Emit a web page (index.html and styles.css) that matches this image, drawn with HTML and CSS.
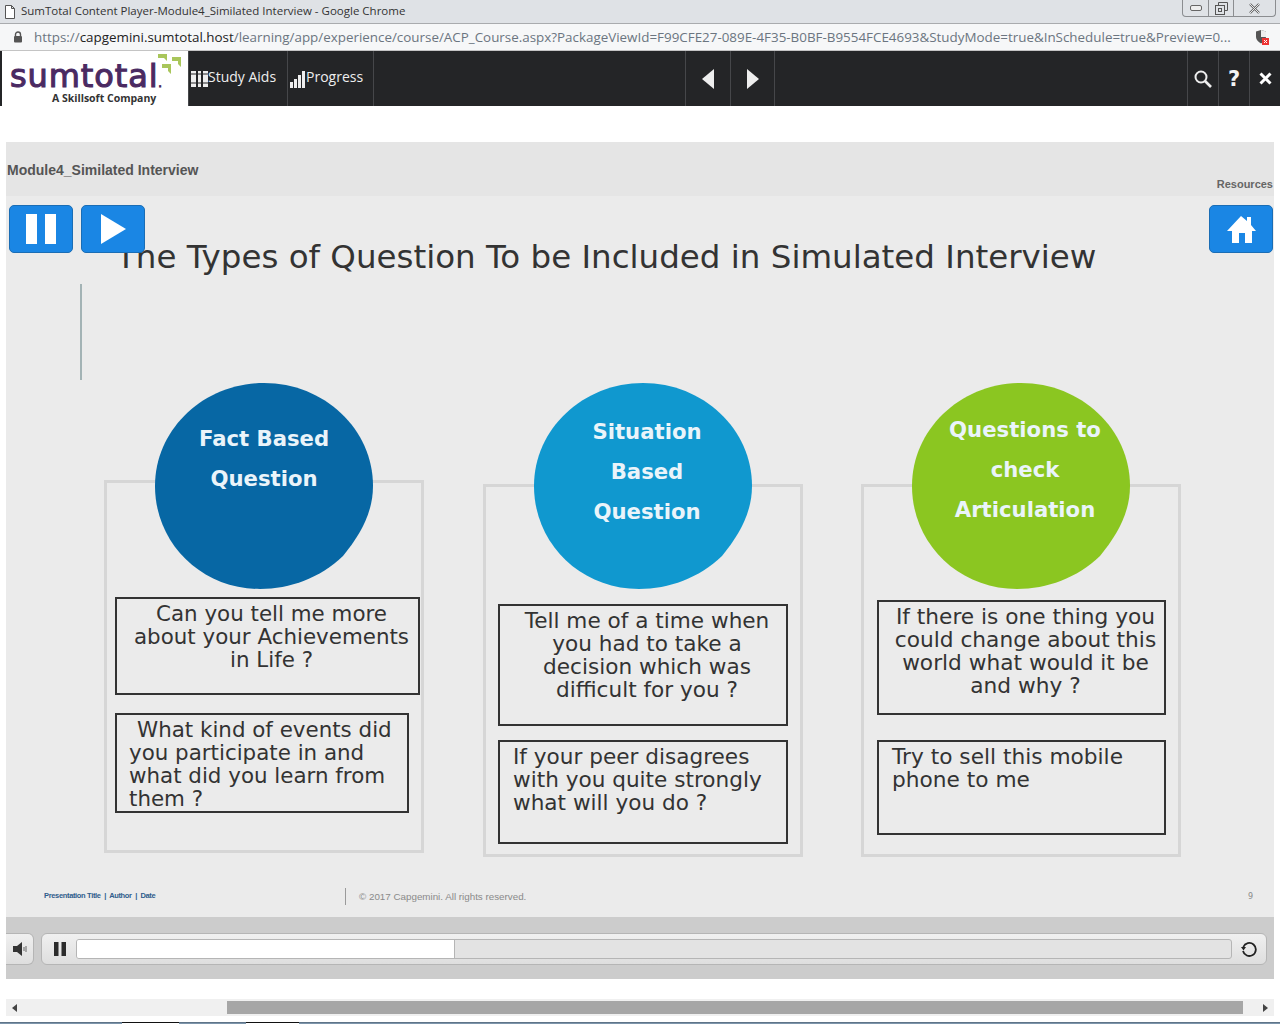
FILE: index.html
```html
<!DOCTYPE html>

<html>
<head>
    <title>SumTotal Content Player-Module4_Similated Interview - Google Chrome</title>
    <link rel="stylesheet" href="styles.css">
</head>

<body>
    <div class="titlebar">
        <svg class="page_icon" width="12" height="14" viewBox="0 0 12 14"><path d="M1.5 .5h6l3 3v10h-9z M7.5 .5v3h3" fill="#fff" stroke="#555"/></svg>
        <span class="title_text">SumTotal Content Player-Module4_Similated Interview - Google Chrome</span>
        <div class="window_btns">
            <div class="win_btn win_min"><svg width="12" height="6" viewBox="0 0 12 6"><rect x=".5" y=".5" width="11" height="5" rx="1.5" fill="#eee" stroke="#666"/></svg></div>
            <div class="win_btn win_max"><svg width="13" height="13" viewBox="0 0 13 13"><path d="M3.5 3V.5h9v8H10" fill="none" stroke="#555"/><rect x=".5" y="3.5" width="9" height="9" fill="none" stroke="#555"/><rect x="3.5" y="6.5" width="3" height="3" fill="none" stroke="#555"/></svg></div>
            <div class="win_btn win_close"><svg width="13" height="11" viewBox="0 0 13 11"><path d="M2 1l9 9M11 1l-9 9" stroke="#666" stroke-width="2.4"/><path d="M2 1l9 9M11 1l-9 9" stroke="#e8e8e8" stroke-width="1"/></svg></div>
        </div>
    </div>

    <div class="addressbar">
        <svg class="lock" width="10" height="12" viewBox="0 0 10 12"><path d="M2.5 5V3.5a2.5 2.5 0 0 1 5 0V5" fill="none" stroke="#555" stroke-width="1.4"/><rect x="1" y="5" width="8" height="6.500" rx="1" fill="#555"/></svg>
        <span class="url"><span class="url_scheme">https://</span><span class="url_host">capgemini.sumtotal.host</span><span class="url_scheme">/learning/app/experience/course/ACP_Course.aspx?PackageViewId=F99CFE27-089E-4F35-B0BF-B9554FCE4693&amp;StudyMode=true&amp;InSchedule=true&amp;Preview=0...</span></span>
        <svg class="shield" width="14" height="16" viewBox="0 0 14 16"><path d="M6 1l5 1.500V8c0 3-2.500 5-5 6.500C3.500 13 1 11 1 8V2.500z" fill="#555"/><path d="M6 1l5 1.500V8H6z" fill="#eee"/><rect x="7" y="9" width="7" height="7" fill="#e33"/><path d="M9 11l3 3M12 11l-3 3" stroke="#fff"/></svg>
    </div>

    <div class="navbar">
        <div class="logo">
            <div class="logo_word">sumtotal<span class="logo_dot">.</span></div>
            <div class="logo_sub">A Skillsoft Company</div>
            <svg class="logo_arrows" width="36" height="26" viewBox="0 0 36 26"><path d="M8 3h9v7l-3-3H8z M22 6h9v10l-3-3v-3h-6z M12 13h9v10l-3-3v-3h-6z" fill="#a9c65b"/></svg>
        </div>
        <div class="nav_item nav_study">
            <svg width="17" height="18" viewBox="0 0 17 18"><path d="M0 1h5v16H0z M7 1h3v16H7z M12 1h5v16h-5z" fill="#eee"/><path d="M0 4h5M0 13h5M7 4h3M7 13h3M12 4h5M12 13h5" stroke="#242527"/></svg>
            <span>Study Aids</span>
        </div>
        <div class="nav_item nav_progress">
            <svg width="15" height="18" viewBox="0 0 15 18"><path d="M0 12h3v6H0z M4 9h3v9H4z M8 5h3v13H8z M12 1h3v17h-3z" fill="#eee"/></svg>
            <span>Progress</span>
        </div>
        <div class="nav_gap_left"></div>
        <div class="nav_arrow">
            <svg width="12" height="20" viewBox="0 0 12 20"><path d="M12 0v20L0 10z" fill="#eee"/></svg>
        </div>
        <div class="nav_arrow">
            <svg width="12" height="20" viewBox="0 0 12 20"><path d="M0 0v20l12-10z" fill="#eee"/></svg>
        </div>
        <div class="nav_gap_right"></div>
        <div class="nav_tool">
            <svg width="18" height="18" viewBox="0 0 18 18"><circle cx="7" cy="7" r="5.500" fill="none" stroke="#eee" stroke-width="2"/><path d="M11 11l6 6" stroke="#eee" stroke-width="2.600"/></svg>
        </div>
        <div class="nav_tool nav_help">?</div>
        <div class="nav_tool">
            <svg width="13" height="13" viewBox="0 0 13 13"><path d="M1.500 1.500l10 10M11.500 1.500l-10 10" stroke="#fff" stroke-width="3"/></svg>
        </div>
    </div>

    <div class="player">
        <div class="player_head">
            <div class="module_name">Module4_Similated Interview</div>
            <div class="resources">Resources</div>
        </div>

        <div class="slide">
            <div class="slide_btn btn_pause"><svg width="30" height="30" viewBox="0 0 30 30"><path d="M0 0h11v30H0z M19 0h11v30H19z" fill="#fff"/></svg></div>
            <div class="slide_btn btn_play"><svg width="25" height="30" viewBox="0 0 25 30"><path d="M0 0v30l25-15z" fill="#fff"/></svg></div>
            <div class="slide_btn btn_home"><svg width="30" height="28" viewBox="0 0 30 28"><path d="M15 1l6 5V2h4v8l5 6h-4v12h-7V18h-6v10H6V16H1z" fill="#fff"/></svg></div>

            <h1 class="slide_title">The Types of Question To be Included in Simulated Interview</h1>
            <div class="slide_rule"></div>

            <div class="panel panel_a"></div>
            <div class="panel panel_b"></div>
            <div class="panel panel_c"></div>

            <div class="circle circle_a">Fact Based<br>Question</div>
            <div class="circle circle_b">Situation<br>Based<br>Question</div>
            <div class="circle circle_c">Questions to<br>check<br>Articulation</div>

            <div class="qbox box_a1 centered">Can you tell me more<br>about your Achievements<br>in Life ?</div>
            <div class="qbox box_a2"><span class="indent">What kind of events did</span><br>you participate in and<br>what did you learn from<br>them ?</div>
            <div class="qbox box_b1 centered">Tell me of a time when<br>you had to take a<br>decision which was<br>difficult for you ?</div>
            <div class="qbox box_b2">If your peer disagrees<br>with you quite strongly<br>what will you do ?</div>
            <div class="qbox box_c1 centered">If there is one thing you<br>could change about this<br>world what would it be<br>and why ?</div>
            <div class="qbox box_c2">Try to sell this mobile<br>phone to me</div>

            <div class="foot_left">Presentation Title &nbsp;|&nbsp; Author &nbsp;|&nbsp; Date</div>
            <div class="foot_rule"></div>
            <div class="foot_copy">© 2017 Capgemini. All rights reserved.</div>
            <div class="foot_page">9</div>
        </div>

        <div class="controls">
            <div class="ctl_sound">
                <svg width="14" height="14" viewBox="0 0 14 14"><path d="M0 4h4l5-4v14l-5-4H0z" fill="#333"/><path d="M11 5v4M13 4v6" stroke="#666"/></svg>
            </div>
            <div class="ctl_main">
                <svg class="ctl_pause" width="12" height="14" viewBox="0 0 12 14"><path d="M0 0h4.500v14H0z M7.500 0H12v14H7.500z" fill="#2b2b2b"/></svg>
                <div class="track"><div class="track_fill" style="width:377px"></div></div>
                <svg class="ctl_replay" width="16" height="16" viewBox="0 0 16 16"><path d="M2.300 6A6.500 6.500 0 1 1 2 10" fill="none" stroke="#222" stroke-width="1.800"/><path d="M0 6h5L2.500 9.500z" fill="#222"/></svg>
            </div>
        </div>
    </div>

    <div class="hscroll">
        <svg width="5" height="8" viewBox="0 0 5 8"><path d="M5 0v8L0 4z" fill="#444"/></svg>
        <div class="hscroll_track"><div class="hscroll_thumb"></div></div>
        <svg width="5" height="8" viewBox="0 0 5 8"><path d="M0 0v8l5-4z" fill="#444"/></svg>
    </div>

    <div class="taskbar">
        <div class="task_item task_first"></div>
        <div class="task_item task_second"></div>
    </div>
</body>
</html>
```

FILE: styles.css
```css
html, body {
	margin: 0;
	padding: 0;
	height: 1024px;
	overflow: hidden;
	background-color: #ffffff;
}

body {
	font-family: "Open Sans", "Liberation Sans", sans-serif;
}

/* browser window */
.titlebar {
	display: flex;
	align-items: center;
	height: 23px;
	background-color: #dfe2e6;
	border-bottom: 1px solid #a9abae;
	font-size: 11.500px;
	color: #333333;
}

.page_icon {
	margin-left: 4px;
	margin-right: 5px;
}

.title_text {
	flex: 1;
	padding-bottom: 2px;
}

.window_btns {
	display: flex;
	align-self: flex-start;
	height: 16px;
	margin-right: 4px;
	border: 1px solid #8b8d90;
	border-top: none;
	border-radius: 0 0 4px 4px;
}

.win_btn {
	display: flex;
	align-items: center;
	justify-content: center;
	border-left: 1px solid #8b8d90;
}

.win_min {
	width: 25px;
	border-left: none;
}

.win_max {
	width: 24px;
}

.win_close {
	width: 41px;
}

.addressbar {
	display: flex;
	align-items: center;
	height: 26px;
	background-color: #f6f7f8;
	border-bottom: 1px solid #c4c4c4;
	font-size: 13.400px;
}

.lock {
	margin-left: 13px;
	margin-right: 11px;
}

.url {
	width: 1221px;
	white-space: nowrap;
}

.url_scheme {
	color: #6b7580;
}

.url_host {
	color: #222222;
}

.shield {
	margin-right: 11px;
}

/* top navigation */
.navbar {
	display: flex;
	height: 55px;
	background-color: #242527;
	color: #eeeeee;
	font-size: 14px;
}

.logo {
	position: relative;
	width: 186px;
	margin-left: 2px;
	background-color: #ffffff;
	color: #4a2a62;
	text-align: center;
}

.logo_word {
	position: absolute;
	left: 8px;
	top: 6px;
	font-family: "DejaVu Sans", sans-serif;
	font-size: 32px;
	letter-spacing: 0.900px;
	-webkit-text-stroke: 1.100px #4a2a62;
	line-height: 38px;
}

.logo_dot {
	font-size: 10px;
	letter-spacing: 0;
}

.logo_sub {
	position: absolute;
	left: 50px;
	top: 40px;
	font-size: 10.500px;
	font-weight: 700;
	color: #333333;
	white-space: nowrap;
}

.logo_arrows {
	position: absolute;
	left: 148px;
	top: 0;
}

.nav_item {
	display: flex;
	align-items: center;
	gap: 1px;
	border-left: 1px solid #46474a;
	padding-left: 2px;
	padding-bottom: 5px;
}

.nav_item svg {
	margin-top: 5px;
}

.nav_study {
	width: 96px;
}

.nav_study span {
	margin-left: -1px;
}

.nav_progress {
	width: 83px;
	border-right: 1px solid #46474a;
}

.nav_gap_left {
	width: 311px;
}

.nav_arrow {
	display: flex;
	align-items: center;
	justify-content: center;
	width: 44px;
	border-left: 1px solid #46474a;
}

.nav_arrow + .nav_arrow {
	width: 43px;
}

.nav_gap_right {
	flex: 1;
	border-left: 1px solid #46474a;
}

.nav_tool {
	display: flex;
	align-items: center;
	justify-content: center;
	width: 30px;
	border-left: 1px solid #46474a;
}

.nav_help {
	font-family: "DejaVu Sans", sans-serif;
	font-size: 21px;
	font-weight: 700;
	color: #f4f4f4;
}

/* player */
.player {
	margin: 36px 6px 0 6px;
}

.player_head {
	position: relative;
	height: 54px;
	background-color: #e5e5e5;
	font-family: "Liberation Sans", sans-serif;
	color: #555555;
}

.module_name {
	position: absolute;
	left: 1px;
	top: 20px;
	font-size: 14px;
	font-weight: 700;
}

.resources {
	position: absolute;
	right: 1px;
	top: 36px;
	font-size: 11px;
	font-weight: 700;
	color: #666666;
}

.slide {
	position: relative;
	height: 721px;
	background-color: #ebebeb;
	font-family: "DejaVu Sans", sans-serif;
}

.slide_btn {
	position: absolute;
	top: 9px;
	display: flex;
	align-items: center;
	justify-content: center;
	width: 62px;
	height: 46px;
	background-color: #1a86e4;
	border: 1px solid #1a6db5;
	border-radius: 5px;
	z-index: 2;
}

.btn_pause {
	left: 3px;
}

.btn_play {
	left: 75px;
}

.btn_home {
	left: 1203px;
}

.slide_title {
	position: absolute;
	left: 110px;
	top: 41px;
	margin: 0;
	font-size: 32.500px;
	font-weight: 400;
	line-height: 40px;
	color: #333333;
	white-space: nowrap;
}

.slide_rule {
	position: absolute;
	left: 74px;
	top: 88px;
	width: 2px;
	height: 96px;
	background-color: #a3b3b5;
}

.panel {
	position: absolute;
	width: 314px;
	height: 367px;
	border: 3px solid #d6d6d6;
}

.panel_a {
	left: 98px;
	top: 284px;
}

.panel_b {
	left: 477px;
	top: 288px;
}

.panel_c {
	left: 855px;
	top: 288px;
}

.circle {
	position: absolute;
	top: 187px;
	box-sizing: border-box;
	width: 218px;
	height: 206px;
	clip-path: path("M109 0C169 0 218 46 218 103C218 130 205 152 188 173C165 195 135 206 105 206C46 206 0 160 0 103C0 46 49 0 109 0Z");
	font-size: 21.200px;
	font-weight: 700;
	line-height: 40px;
	text-align: center;
	color: #eaf4fa;
}

.circle_a {
	left: 149px;
	padding-top: 36px;
	background-color: #0767a4;
}

.circle_b {
	left: 528px;
	padding: 29px 0 0 8px;
	background-color: #1098cf;
}

.circle_c {
	left: 906px;
	padding: 27px 0 0 8px;
	background-color: #8bc621;
}

.qbox {
	position: absolute;
	box-sizing: border-box;
	border: 2px solid #333333;
	padding: 3px 0 0 13px;
	font-size: 21.400px;
	line-height: 23px;
	color: #333333;
	white-space: nowrap;
}

.centered {
	padding-left: 8px;
	text-align: center;
}

.indent {
	margin-left: 8px;
}

.box_a1 {
	left: 109px;
	top: 401px;
	width: 305px;
	height: 98px;
}

.box_a2 {
	left: 109px;
	top: 517px;
	width: 294px;
	height: 100px;
	padding-left: 12px;
}

.box_b1 {
	left: 492px;
	top: 408px;
	width: 290px;
	height: 122px;
	font-size: 21.600px;
}

.box_b2 {
	left: 492px;
	top: 544px;
	width: 290px;
	height: 104px;
	font-size: 21.600px;
}

.box_c1 {
	left: 871px;
	top: 404px;
	width: 289px;
	height: 115px;
	font-size: 21.700px;
}

.box_c2 {
	left: 871px;
	top: 544px;
	width: 289px;
	height: 95px;
	font-size: 21.700px;
}

.foot_left {
	position: absolute;
	left: 38px;
	top: 695px;
	font-family: "Liberation Sans", sans-serif;
	font-size: 7.500px;
	font-weight: 700;
	letter-spacing: -0.340px;
	color: #2f5d8c;
	white-space: nowrap;
}

.foot_rule {
	position: absolute;
	left: 339px;
	top: 692px;
	width: 1px;
	height: 17px;
	background-color: #9a9a9a;
}

.foot_copy {
	position: absolute;
	left: 353px;
	top: 695px;
	font-family: "Liberation Sans", sans-serif;
	font-size: 9.800px;
	color: #8a8a8a;
}

.foot_page {
	position: absolute;
	left: 1242px;
	top: 696px;
	font-size: 8px;
	color: #8a8a8a;
}

.controls {
	display: flex;
	align-items: center;
	gap: 7px;
	box-sizing: border-box;
	height: 62px;
	padding-top: 2px;
	background-color: #cccccc;
}

.ctl_sound, .ctl_main {
	display: flex;
	align-items: center;
	box-sizing: border-box;
	height: 32px;
	background: linear-gradient(#f0f0f0, #dedede);
	border: 1px solid #b5b5b5;
}

.ctl_sound {
	justify-content: center;
	width: 28px;
	border-left: none;
	border-radius: 0 6px 6px 0;
}

.ctl_main {
	width: 1226px;
	border-radius: 6px;
}

.ctl_pause {
	margin-left: 12px;
}

.track {
	flex: 1;
	height: 18px;
	margin: 0 9px 0 10px;
	background-color: #e3e3e3;
	border: 1px solid #b5b5b5;
	border-radius: 3px;
	overflow: hidden;
}

.track_fill {
	height: 100%;
	background-color: #ffffff;
	border-right: 1px solid #b5b5b5;
}

.ctl_replay {
	margin-right: 9px;
}

/* page scrollbar */
.hscroll {
	display: flex;
	align-items: center;
	justify-content: space-between;
	box-sizing: border-box;
	height: 17px;
	margin: 20px 6px 0 6px;
	padding: 0 6px;
	background-color: #f0f0f0;
}

.hscroll_track {
	flex: 1;
	height: 13px;
	margin: 0 16px 0 0;
}

.hscroll_thumb {
	width: 1016px;
	height: 13px;
	margin-left: 210px;
	background-color: #a6a6a6;
}

.taskbar {
	display: flex;
	height: 3px;
	margin-top: 6px;
	background-color: #7d95ab;
	border-top: 1px solid #5f7488;
	box-sizing: border-box;
}

.task_item {
	background-color: #ffffff;
	border-top: 1px solid #111111;
	margin-top: -1px;
}

.task_first {
	width: 57px;
	margin-left: 122px;
}

.task_second {
	width: 53px;
	margin-left: 67px;
}
```
